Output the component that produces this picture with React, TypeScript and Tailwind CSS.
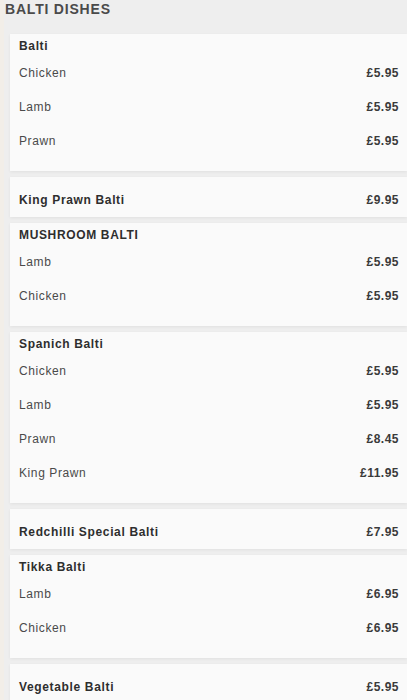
import React from 'react';

type Item = { name: string; price: string };
type Group = { title: string; price?: string; items?: Item[] };

const groups: Group[] = [
  {
    title: 'Balti',
    items: [
      { name: 'Chicken', price: '£5.95' },
      { name: 'Lamb', price: '£5.95' },
      { name: 'Prawn', price: '£5.95' },
    ],
  },
  { title: 'King Prawn Balti', price: '£9.95' },
  {
    title: 'MUSHROOM BALTI',
    items: [
      { name: 'Lamb', price: '£5.95' },
      { name: 'Chicken', price: '£5.95' },
    ],
  },
  {
    title: 'Spanich Balti',
    items: [
      { name: 'Chicken', price: '£5.95' },
      { name: 'Lamb', price: '£5.95' },
      { name: 'Prawn', price: '£8.45' },
      { name: 'King Prawn', price: '£11.95' },
    ],
  },
  { title: 'Redchilli Special Balti', price: '£7.95' },
  {
    title: 'Tikka Balti',
    items: [
      { name: 'Lamb', price: '£6.95' },
      { name: 'Chicken', price: '£6.95' },
    ],
  },
  { title: 'Vegetable Balti', price: '£5.95' },
];

const Price = ({ value }: { value: string }) => (
  <span className="text-[12px] font-bold tracking-[0.5px] text-[#3a3a3a]">{value}</span>
);

const MenuCard = ({ group }: { group: Group }) => {
  if (!group.items) {
    return (
      <div className="bg-[#fafafa] pt-[6px] shadow-[0_1px_3px_rgba(0,0,0,0.06)]">
        <div className="flex h-[34px] items-center justify-between pl-[9px] pr-[8px]">
          <span className="text-[12px] font-bold tracking-[0.65px] text-[#2e2e2e]">{group.title}</span>
          <Price value={group.price!} />
        </div>
      </div>
    );
  }

  return (
    <div className="bg-[#fafafa] pb-[13px] shadow-[0_1px_3px_rgba(0,0,0,0.06)]">
      <div className="flex h-[22px] items-center pl-[9px] pt-[1px]">
        <span className="text-[12px] font-bold tracking-[0.65px] text-[#2e2e2e]">{group.title}</span>
      </div>
      {group.items.map((item, i) => (
        <div key={i} className="flex h-[34px] items-center justify-between pl-[9px] pr-[8px]">
          <span className="text-[12px] tracking-[0.6px] text-[#4a4a4a]">{item.name}</span>
          <Price value={item.price} />
        </div>
      ))}
    </div>
  );
};

export default function App() {
  return (
    <div
      className="min-h-[700px] overflow-hidden border-l-[4px] border-[#f2eee8] bg-[#eeeeee]"
      style={{ fontFamily: '"Liberation Sans", Arial, sans-serif' }}
    >
      <div className="flex h-[34px] items-start pl-[1px] pt-[1px]">
        <h1 className="text-[14px] font-bold leading-[16px] tracking-[0.8px] text-[#4a4a4a]">BALTI DISHES</h1>
      </div>
      <div className="flex flex-col gap-[6px] pl-[6px]">
        {groups.map((g, i) => (
          <MenuCard key={i} group={g} />
        ))}
      </div>
    </div>
  );
}
